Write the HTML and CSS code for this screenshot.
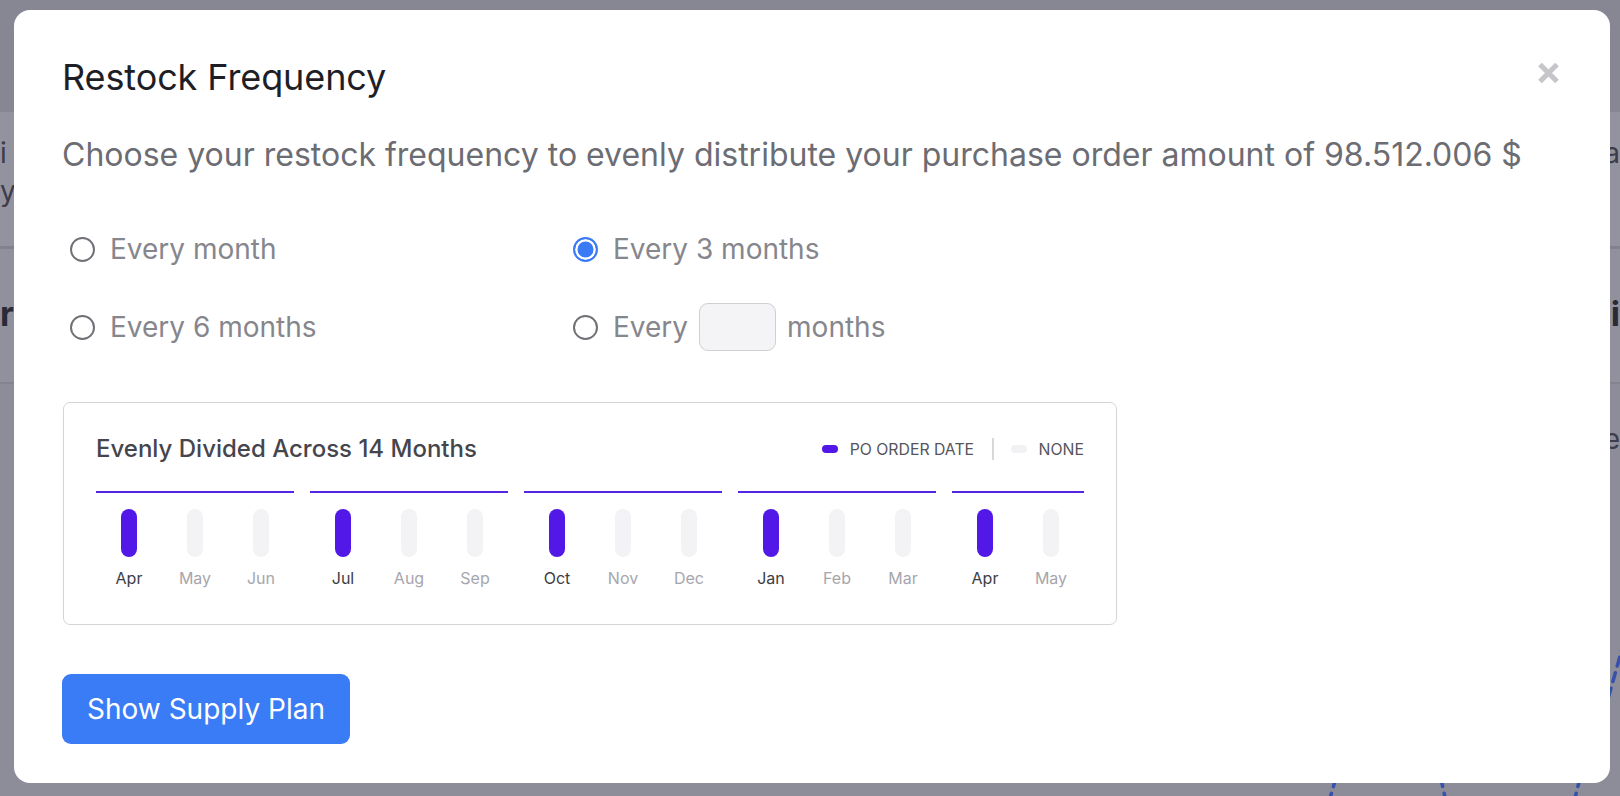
FILE: index.html
```html
<!DOCTYPE html>
<html lang="en">
<head>
<meta charset="utf-8">
<title>Restock Frequency</title>
<link rel="stylesheet" href="styles.css">
</head>
<body>
<div class="page">
  <div class="page-head"></div>
  <div class="band band-1">
    <div class="band-col"><span class="ghost">i</span><span class="ghost">yo</span></div>
    <div class="band-col"><span class="ghost">a</span></div>
  </div>
  <div class="band band-2">
    <div class="band-col"><span class="ghost ghost-bold">r</span></div>
    <div class="band-col"><span class="ghost ghost-bold">i</span></div>
  </div>
  <div class="page-rest">
    <div class="rest-row"><span></span><span class="ghost">re</span></div>
    <svg class="rest-chart" width="1620" height="340" viewBox="0 0 1620 340">
      <path d="M1329 346 L1337 318" class="dash"/>
      <path d="M1446 346 L1440 318" class="dash"/>
      <path d="M1574 346 L1581 318" class="dash"/>
      <path d="M1624 186 L1606 250" class="dash"/>
    </svg>
  </div>
</div>

<div class="overlay">
  <div class="modal" role="dialog" aria-labelledby="modal-title">
    <div class="modal-head">
      <h2 class="modal-title" id="modal-title">Restock Frequency</h2>
      <button class="close" type="button" aria-label="Close">
        <svg width="23" height="22" viewBox="0 0 23 22"><path d="M3 2.5 L20 19.5 M20 2.5 L3 19.5" stroke="#c6c6ca" stroke-width="5.2" stroke-linecap="butt"/></svg>
      </button>
    </div>
    <p class="lead">Choose your restock frequency to evenly distribute your purchase order amount of 98.512.006 $</p>

    <div class="options">
      <label class="option"><input class="radio" type="radio" name="freq"><span>Every month</span></label>
      <label class="option"><input class="radio" type="radio" name="freq" checked><span>Every 3 months</span></label>
      <label class="option"><input class="radio" type="radio" name="freq"><span>Every 6 months</span></label>
      <label class="option"><input class="radio" type="radio" name="freq"><span>Every</span><input class="num-input" type="text" aria-label="Custom months"><span>months</span></label>
    </div>

    <div class="chart-card">
      <div class="chart-head">
        <h3 class="chart-title">Evenly Divided Across 14 Months</h3>
        <div class="legend">
          <span class="legend-item"><span class="pill pill-on"></span>PO ORDER DATE</span>
          <span class="legend-sep"></span>
          <span class="legend-item"><span class="pill pill-off"></span>NONE</span>
        </div>
      </div>
      <div class="groups">
        <div class="group">
          <div class="month on"><span class="bar"></span><span class="mlabel">Apr</span></div>
          <div class="month"><span class="bar"></span><span class="mlabel">May</span></div>
          <div class="month"><span class="bar"></span><span class="mlabel">Jun</span></div>
        </div>
        <div class="group">
          <div class="month on"><span class="bar"></span><span class="mlabel">Jul</span></div>
          <div class="month"><span class="bar"></span><span class="mlabel">Aug</span></div>
          <div class="month"><span class="bar"></span><span class="mlabel">Sep</span></div>
        </div>
        <div class="group">
          <div class="month on"><span class="bar"></span><span class="mlabel">Oct</span></div>
          <div class="month"><span class="bar"></span><span class="mlabel">Nov</span></div>
          <div class="month"><span class="bar"></span><span class="mlabel">Dec</span></div>
        </div>
        <div class="group">
          <div class="month on"><span class="bar"></span><span class="mlabel">Jan</span></div>
          <div class="month"><span class="bar"></span><span class="mlabel">Feb</span></div>
          <div class="month"><span class="bar"></span><span class="mlabel">Mar</span></div>
        </div>
        <div class="group">
          <div class="month on"><span class="bar"></span><span class="mlabel">Apr</span></div>
          <div class="month"><span class="bar"></span><span class="mlabel">May</span></div>
        </div>
      </div>
    </div>

    <div class="actions">
      <button class="primary" type="button">Show Supply Plan</button>
    </div>
  </div>
</div>
</body>
</html>
```

FILE: styles.css
```css
* { box-sizing: border-box; }

html, body {
  margin: 0;
  padding: 0;
  width: 1620px;
  height: 796px;
  overflow: hidden;
}

body {
  font-family: "Inter", "Noto Sans", "Liberation Sans", sans-serif;
  background: #8d8d99;
  color: #1e1e26;
}

/* ---------- dimmed page underneath ---------- */
.page {
  display: flex;
  flex-direction: column;
  height: 796px;
}
.page-head {
  height: 112px;
  background: #878794;
}
.band {
  display: flex;
  justify-content: space-between;
  background: #9393a0;
  border-bottom: 3px solid #82828f;
}
.band-1 { height: 137px; padding-top: 24px; }
.band-2 { height: 135px; padding-top: 48px; background: #91919d; border-bottom: 2px solid #84848f; }
.band-col {
  display: flex;
  flex-direction: column;
  gap: 4px;
}
.ghost {
  font-size: 28px;
  line-height: 34px;
  color: #3c3c4a;
}
.ghost-bold { font-weight: 700; color: #2a2a36; font-size: 34px; }
.page-rest {
  flex: 1;
  background: #8d8d9a;
  padding-top: 38px;
  display: flex;
  flex-direction: column;
}
.rest-row {
  display: flex;
  justify-content: space-between;
}
.rest-chart { display: block; }
.dash {
  fill: none;
  stroke: #3551ad;
  stroke-width: 3.5;
  stroke-dasharray: 9 7;
  stroke-linecap: round;
}

/* ---------- overlay + modal ---------- */
.overlay {
  position: fixed;
  inset: 0;
  padding: 10px 10px 13px 14px;
  display: flex;
  align-items: flex-start;
}
.modal {
  width: 1596px;
  background: #ffffff;
  border-radius: 16px;
  padding: 45px 48px 39px 48px;
}

.modal-head {
  display: flex;
  justify-content: space-between;
  align-items: flex-start;
}
.modal-title {
  margin: 0;
  font-size: 36px;
  line-height: 44px;
  font-weight: 400;
  color: #1e1e26;
  letter-spacing: -0.1px;
}
.close {
  border: 0;
  background: none;
  padding: 0;
  margin: 7px 2px 0 0;
  width: 23px;
  height: 22px;
  cursor: pointer;
  display: flex;
}

.lead {
  margin: 37px 0 0;
  font-size: 32px;
  line-height: 38px;
  color: #6c6c73;
  white-space: nowrap;
}

/* ---------- options ---------- */
.options {
  margin-top: 51px;
  display: grid;
  grid-template-columns: 503px auto;
  row-gap: 30px;
  justify-content: start;
}
.option {
  display: flex;
  align-items: center;
  height: 48px;
  font-size: 28px;
  color: #86868d;
  cursor: pointer;
}
.radio {
  appearance: none;
  -webkit-appearance: none;
  margin: 0 15px 0 8px;
  width: 25px;
  height: 25px;
  border-radius: 50%;
  border: 2px solid #707076;
  background: #fff;
  flex: none;
}
.radio:checked {
  border-color: #3a7af5;
  background: #3a7af5;
  box-shadow: inset 0 0 0 2.5px #ffffff;
}
.num-input {
  width: 77px;
  height: 48px;
  margin: 0 11px 0 11px;
  border: 1.5px solid #cfcfd4;
  border-radius: 9px;
  background: #f4f4f6;
  font: inherit;
  padding: 0 10px;
}

/* ---------- chart card ---------- */
.chart-card {
  margin-top: 51px;
  width: 1054px;
  margin-left: 1px;
  border: 1.5px solid #d5d5d9;
  border-radius: 7px;
  padding: 32px 32px 37px;
}
.chart-head {
  display: flex;
  justify-content: space-between;
  align-items: center;
  height: 28px;
}
.chart-title {
  margin: 0;
  font-size: 24px;
  line-height: 26px;
  font-weight: 500;
  color: #45454d;
}
.legend {
  display: flex;
  align-items: center;
  font-size: 15.8px;
  color: #55555c;
}
.legend-item {
  display: flex;
  align-items: center;
  gap: 12px;
}
.pill {
  width: 16px;
  height: 8px;
  border-radius: 4px;
}
.pill-on { background: #5118e8; }
.pill-off { background: #f2f2f5; }
.legend-sep {
  width: 1.5px;
  height: 22px;
  background: #d8d8dc;
  margin: 0 17px 0 18px;
}

.groups {
  margin-top: 28px;
  display: flex;
  gap: 16px;
}
.group {
  display: flex;
  border-top: 2px solid #5424e2;
  padding-top: 16px;
}
.month {
  width: 66px;
  display: flex;
  flex-direction: column;
  align-items: center;
}
.bar {
  width: 16px;
  height: 48px;
  border-radius: 8px;
  background: #f3f3f6;
}
.month.on .bar { background: #5118e8; }
.mlabel {
  margin-top: 12px;
  font-size: 16px;
  line-height: 18px;
  color: #a6a6ad;
}
.month.on .mlabel { color: #3d3d45; }

/* ---------- actions ---------- */
.actions {
  margin-top: 49px;
  display: flex;
}
.primary {
  width: 288px;
  height: 70px;
  border: 0;
  border-radius: 9px;
  background: #3a7bf6;
  color: #ffffff;
  font-family: inherit;
  font-size: 28px;
  font-weight: 400;
  cursor: pointer;
}
```
